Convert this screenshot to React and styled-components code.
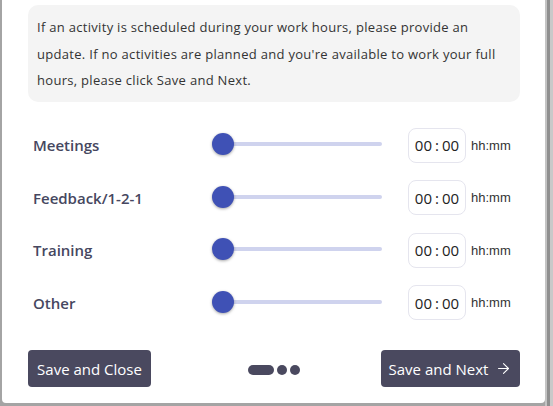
import React from "react";
import styled, { createGlobalStyle } from "styled-components";
import { ArrowRight } from "lucide-react";

const GlobalStyle = createGlobalStyle`
  html, body { margin: 0; padding: 0; height: 406px; overflow: hidden; background: #a4a4a4; }
  #root { height: 406px; }
  * { box-sizing: border-box; }
`;

const Page = styled.div`
  display: flex;
  align-items: flex-start;
  height: 406px;
  padding-left: 2px;
`;

const Dialog = styled.div`
  width: 543px;
  height: 403px;
  background: #fff;
  border-radius: 0 0 4px 4px;
  display: flex;
  flex-direction: column;
  padding: 5px 25px 16px 26px;
`;

const ScrollStrip = styled.div`
  flex: 1;
  align-self: stretch;
  background: linear-gradient(to right, #c4c4c4 0 2px, #8f8f8f 2px 5px, #c9c9c9 5px);
`;

const Notice = styled.div`
  background: #f4f4f4;
  border-radius: 10px;
  padding: 9px 9px 8px 9px;
  font-family: "Open Sans", sans-serif;
  font-size: 13px;
  letter-spacing: 0.3px;
  line-height: 26.5px;
  color: #333;
`;

const Rows = styled.div`
  display: flex;
  flex-direction: column;
  gap: 17.5px;
  margin-top: 26px;
`;

const Row = styled.div`
  display: flex;
  align-items: center;
  height: 35px;
  padding-left: 5px;
`;

const Label = styled.div`
  width: 179px;
  font-family: "Open Sans", sans-serif;
  font-weight: 600;
  font-size: 15px;
  color: #464760;
`;

const Slider = styled.div`
  position: relative;
  width: 159px;
  height: 4px;
  margin-left: 11px;
  margin-top: -2px;
  border-radius: 2px;
  background: #cfd3ee;
`;

const Thumb = styled.div`
  position: absolute;
  left: -11px;
  top: -9px;
  width: 22px;
  height: 22px;
  border-radius: 50%;
  background: #3f51b5;
  box-shadow: 0 1px 3px rgba(0, 0, 0, 0.35);
`;

const TimeBox = styled.div`
  margin-left: 26px;
  width: 58px;
  height: 35px;
  border: 1px solid #e5e5ee;
  border-radius: 8px;
  display: flex;
  align-items: center;
  justify-content: center;
  gap: 3px;
  font-family: "Open Sans", sans-serif;
  font-size: 15px;
  color: #222;
`;

const Unit = styled.span`
  margin-left: 5px;
  font-family: "Liberation Sans", Arial, sans-serif;
  font-size: 13px;
  color: #333;
`;

const Footer = styled.div`
  margin-top: auto;
  display: grid;
  grid-template-columns: 1fr auto 1fr;
  align-items: center;
`;

const Button = styled.button`
  justify-self: ${(p) => (p.$right ? "end" : "start")};
  width: ${(p) => p.$w}px;
  height: 37px;
  border: none;
  border-radius: 4px;
  background: #4a495f;
  color: #fff;
  font-family: "Open Sans", sans-serif;
  font-size: 15px;
  display: flex;
  align-items: center;
  justify-content: center;
  gap: 7px;
  padding: 0;
  cursor: pointer;
`;

const Dots = styled.div`
  display: flex;
  align-items: center;
  gap: 3px;
  margin-top: 3px;
`;

const Dot = styled.span`
  width: ${(p) => (p.$active ? 26 : 10)}px;
  height: 10px;
  border-radius: 5px;
  background: #4a495f;
`;

const activities = ["Meetings", "Feedback/1-2-1", "Training", "Other"];

export default function App() {
  return (
    <>
      <GlobalStyle />
      <Page>
        <Dialog>
          <Notice>
            If an activity is scheduled during your work hours, please provide an
            update. If no activities are planned and you're available to work your full
            hours, please click Save and Next.
          </Notice>
          <Rows>
            {activities.map((a) => (
              <Row key={a}>
                <Label>{a}</Label>
                <Slider>
                  <Thumb />
                </Slider>
                <TimeBox>
                  <span>00</span>
                  <span>:</span>
                  <span>00</span>
                </TimeBox>
                <Unit>hh:mm</Unit>
              </Row>
            ))}
          </Rows>
          <Footer>
            <Button $w={123}>Save and Close</Button>
            <Dots>
              <Dot $active />
              <Dot />
              <Dot />
            </Dots>
            <Button $w={139} $right>
              Save and Next
              <ArrowRight size={17} strokeWidth={1.5} />
            </Button>
          </Footer>
        </Dialog>
        <ScrollStrip />
      </Page>
    </>
  );
}
